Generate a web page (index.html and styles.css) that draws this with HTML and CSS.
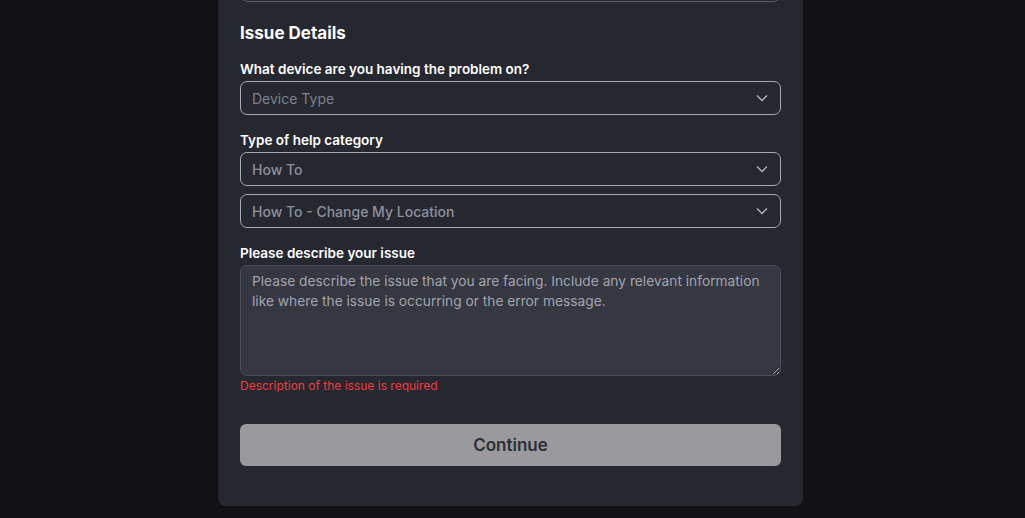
FILE: index.html
```html
<!DOCTYPE html>
<html lang="en">
<head>
    <meta charset="UTF-8">
    <meta name="viewport" content="width=device-width, initial-scale=1.0">
    <title>Support Request</title>
    <link rel="stylesheet" href="styles.css">
</head>
<body>
    <div class="form-card">
        <div class="prev-field"></div>

        <h2 class="section-title">Issue Details</h2>

        <label class="field-label">What device are you having the problem on?</label>
        <div class="select-box placeholder">
            <span>Device Type</span>
            <svg class="chevron" viewBox="0 0 12 8" width="12" height="8"><path d="M1 1.5l5 5 5-5" fill="none" stroke="currentColor" stroke-width="1.3"/></svg>
        </div>

        <label class="field-label">Type of help category</label>
        <div class="select-box">
            <span>How To</span>
            <svg class="chevron" viewBox="0 0 12 8" width="12" height="8"><path d="M1 1.5l5 5 5-5" fill="none" stroke="currentColor" stroke-width="1.3"/></svg>
        </div>
        <div class="select-box second">
            <span>How To - Change My Location</span>
            <svg class="chevron" viewBox="0 0 12 8" width="12" height="8"><path d="M1 1.5l5 5 5-5" fill="none" stroke="currentColor" stroke-width="1.3"/></svg>
        </div>

        <label class="field-label">Please describe your issue</label>
        <textarea class="issue-text" placeholder="Please describe the issue that you are facing. Include any relevant information like where the issue is occurring or the error message."></textarea>
        <div class="error-msg">Description of the issue is required</div>

        <button class="continue-btn">Continue</button>
    </div>
</body>
</html>
```

FILE: styles.css
```css
body {
    margin: 0;
    padding-right: 4px;
    background: #121214;
    font-family: 'Inter', 'Noto Sans', sans-serif;
    color: #fff;
}
.form-card {
    width: 541px;
    margin: -40px auto 0;
    padding: 0 22px 40px;
    background: #262830;
    border-radius: 0 0 8px 8px;
    display: flex;
    flex-direction: column;
}
.prev-field {
    height: 40px;
    border: 1px solid #5a5d66;
    border-radius: 8px;
}
.section-title {
    margin: 19px 0 0;
    font-size: 17px;
    font-weight: 700;
    line-height: 24px;
    color: #fff;
}
.field-label {
    display: block;
    font-size: 13.5px;
    font-weight: 600;
    line-height: 18px;
    margin-top: 16px;
    margin-bottom: 3px;
    color: #fff;
}
.section-title + .field-label {
    margin-top: 15px;
}
.select-box {
    height: 32px;
    border: 1px solid #a6a9b0;
    border-radius: 7px;
    padding: 0 11px;
    display: flex;
    align-items: center;
    justify-content: space-between;
    font-size: 14px;
    font-weight: 500;
    color: #8d919c;
}
.select-box.placeholder {
    font-weight: 400;
    color: #7d818c;
}
.select-box.second {
    margin-top: 8px;
}
.chevron {
    color: #b4b7be;
    margin-right: 1px;
}
.issue-text {
    height: 111px;
    box-sizing: border-box;
    resize: vertical;
    background: #353741;
    border: 1px solid #4c4f59;
    border-radius: 7px;
    padding: 5px 11px;
    font-family: inherit;
    font-size: 13.75px;
    line-height: 20px;
    color: #fff;
}
.issue-text::placeholder {
    color: #a0a4ad;
}
.error-msg {
    margin-top: 2px;
    font-size: 12px;
    line-height: 16px;
    color: #ef3b3b;
}
.continue-btn {
    margin-top: 30px;
    height: 42px;
    border: none;
    border-radius: 6px;
    background: #9a9a9e;
    color: #2c2e35;
    font-family: inherit;
    font-size: 17px;
    font-weight: 600;
    cursor: pointer;
}
```
